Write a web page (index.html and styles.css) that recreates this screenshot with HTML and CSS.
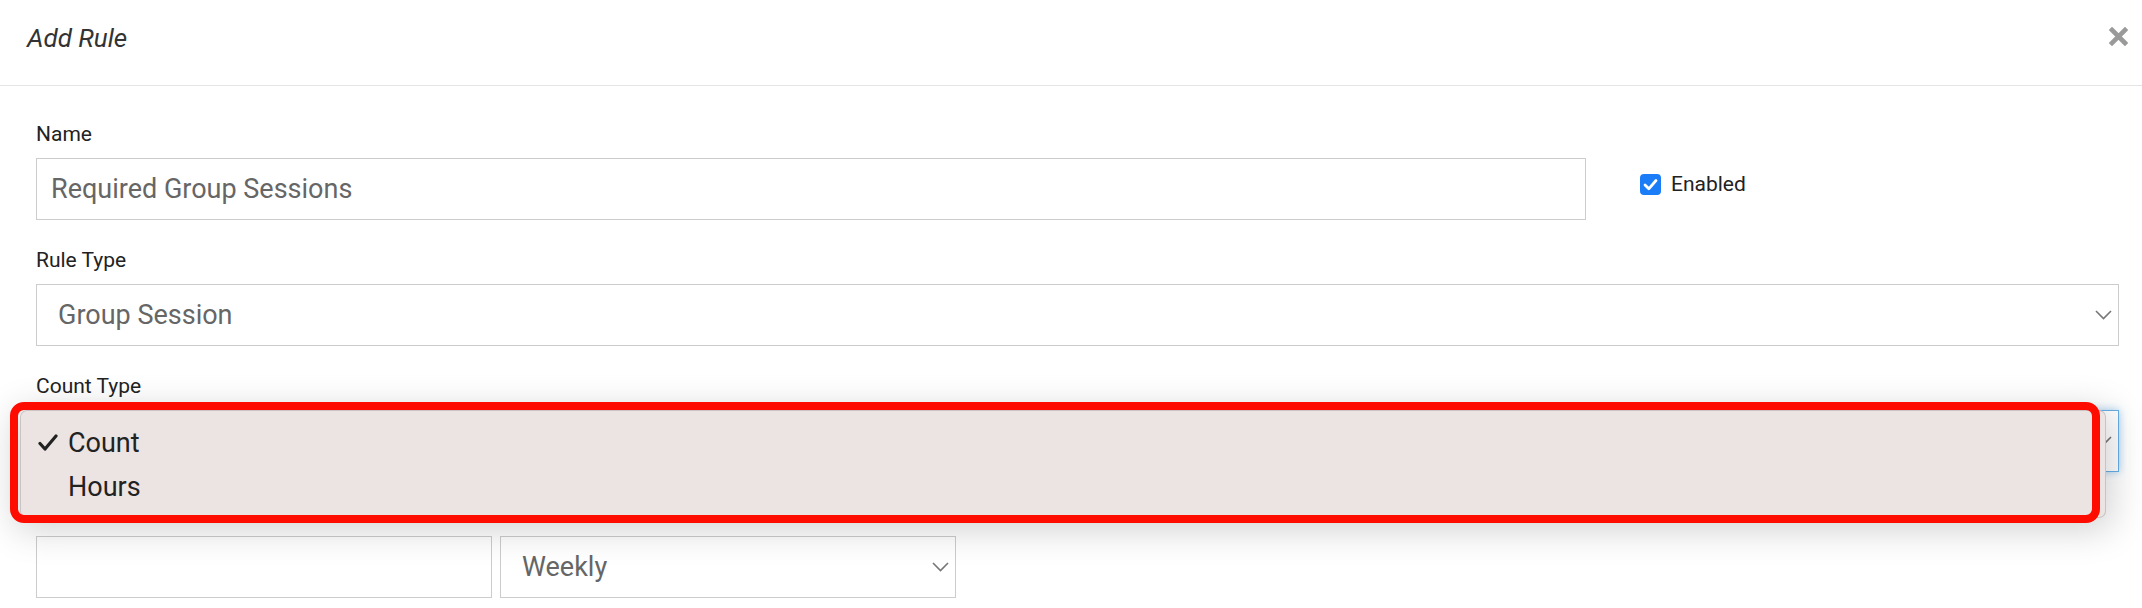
FILE: index.html
```html
<!DOCTYPE html>
<html lang="en">
<head>
<meta charset="utf-8">
<title>Add Rule</title>
<link rel="stylesheet" href="styles.css">
</head>
<body>
<div class="modal">
  <header class="modal-header">
    <h1 class="modal-title">Add Rule</h1>
    <button class="close-btn" aria-label="Close">
      <svg width="19" height="19" viewBox="0 0 19 19"><path d="M3 3 L16 16 M16 3 L3 16" stroke="#9a9a9a" stroke-width="4.6" stroke-linecap="square"/></svg>
    </button>
  </header>
  <div class="modal-body">
    <div class="row-name">
      <div class="group group-name">
        <label class="label">Name</label>
        <div class="field field-input">Required Group Sessions</div>
      </div>
      <label class="check">
        <span class="checkbox"><svg width="21" height="21" viewBox="0 0 21 21"><rect x="0" y="0" width="21" height="21" rx="4" fill="#1a7cf6"/><path d="M5 11 L8.8 14.8 L16 6.5" stroke="#fff" stroke-width="2.8" fill="none" stroke-linecap="round" stroke-linejoin="round"/></svg></span>
        <span class="check-text">Enabled</span>
      </label>
    </div>
    <div class="group">
      <label class="label">Rule Type</label>
      <div class="field field-select"><span>Group Session</span><svg class="chev" width="17" height="10" viewBox="0 0 17 10"><path d="M1 1 L8.5 8.5 L16 1" stroke="#777" stroke-width="1.6" fill="none"/></svg></div>
    </div>
    <div class="group">
      <label class="label">Count Type</label>
      <div class="field field-select focused"><span class="under">Count</span><svg class="chev" width="17" height="10" viewBox="0 0 17 10"><path d="M1 1 L8.5 8.5 L16 1" stroke="#777" stroke-width="1.6" fill="none"/></svg></div>
    </div>
    <div class="group">
      <label class="label">Required Count per Period</label>
      <div class="row-pair">
        <div class="field field-input half"></div>
        <div class="field field-select half"><span>Weekly</span><svg class="chev" width="17" height="10" viewBox="0 0 17 10"><path d="M1 1 L8.5 8.5 L16 1" stroke="#777" stroke-width="1.6" fill="none"/></svg></div>
      </div>
    </div>
  </div>

  <div class="menu">
    <div class="menu-item"><svg class="tick" width="20" height="17" viewBox="0 0 20 17"><path d="M2 9.5 L7 15 L18 2" stroke="#222" stroke-width="3.2" fill="none" stroke-linecap="round" stroke-linejoin="round"/></svg><span>Count</span></div>
    <div class="menu-item"><span>Hours</span></div>
  </div>
  <div class="highlight"></div>
</div>
</body>
</html>
```

FILE: styles.css
```css
* { box-sizing: border-box; }
html, body {
  margin: 0;
  padding: 0;
  background: #fff;
}
body {
  font-family: Roboto, "Liberation Sans", Arial, sans-serif;
  color: #222;
  width: 2142px;
  height: 608px;
  overflow: hidden;
}
.modal {
  position: relative;
  width: 2142px;
  height: 608px;
}
.modal-header {
  height: 86px;
  border-bottom: 1px solid #e5e5e5;
  display: flex;
  justify-content: space-between;
  align-items: flex-start;
  padding: 0 14px 0 27px;
}
.modal-title {
  margin: 23px 0 0 0;
  font-size: 26px;
  line-height: 30px;
  font-style: italic;
  font-weight: 400;
  color: #333;
}
.close-btn {
  margin-top: 27px;
  padding: 0;
  border: 0;
  background: none;
  width: 19px;
  height: 19px;
  display: block;
}
.close-btn svg { display: block; }
.modal-body {
  padding: 36px 23px 0 36px;
}
.row-name {
  display: flex;
  align-items: flex-start;
}
.group {
  margin-bottom: 28px;
}
.group-name {
  width: 1550px;
}
.label {
  display: block;
  font-size: 21px;
  line-height: 24px;
  margin-bottom: 12px;
  color: #222;
}
.field {
  height: 62px;
  border: 1px solid #cccccc;
  background: #fff;
  font-size: 27px;
  color: #666;
  display: flex;
  align-items: center;
}
.field-input {
  padding-left: 14px;
}
.field-select {
  padding: 0 6px 0 21px;
  justify-content: space-between;
}
.chev { display: block; }
.focused {
  border-color: #66afe9;
  box-shadow: 0 0 8px rgba(102, 175, 233, 0.6);
}
.check {
  margin: 50px 0 0 54px;
  display: flex;
  align-items: center;
  gap: 10px;
  font-size: 21px;
  color: #222;
}
.checkbox svg { display: block; }
.row-pair {
  display: flex;
  gap: 8px;
}
.half {
  width: 456px;
}
.menu {
  position: absolute;
  left: 20px;
  top: 410px;
  width: 2086px;
  height: 108px;
  padding-top: 10px;
  background: #ebe4e3;
  border: 1px solid rgba(0, 0, 0, 0.14);
  border-radius: 7px;
  box-shadow: 0 6px 36px 6px rgba(0, 0, 0, 0.18);
}
.menu-item {
  height: 44px;
  display: flex;
  align-items: center;
  padding-left: 47px;
  font-size: 27px;
  color: #222;
  position: relative;
}
.tick {
  position: absolute;
  left: 17px;
  top: 13px;
}
.highlight {
  position: absolute;
  left: 10px;
  top: 402px;
  width: 2090px;
  height: 121px;
  border: 8px solid #ff0c00;
  border-radius: 14px;
}
```
